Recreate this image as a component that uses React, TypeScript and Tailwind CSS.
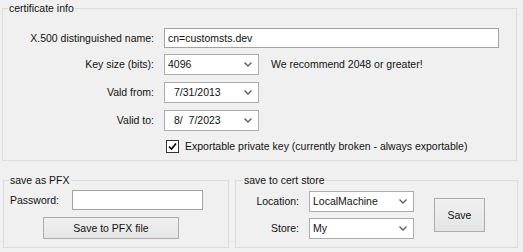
import React from 'react';

function Chevron() {
  return (
    <svg width="8" height="5" viewBox="0 0 8 5" className="shrink-0">
      <path d="M0.5 0.5 L4 4 L7.5 0.5" fill="none" stroke="#606060" strokeWidth="1.4" />
    </svg>
  );
}

function Combo({ value, className, textClass }: { value: string; className: string; textClass?: string }) {
  return (
    <div
      className={
        'flex items-center justify-between bg-white border border-[#acacac] pr-[6px] ' + className
      }
    >
      <span className={'whitespace-pre ' + (textClass ?? 'pl-[3px]')}>{value}</span>
      <Chevron />
    </div>
  );
}

function Button({ label, className }: { label: string; className: string }) {
  return (
    <div
      className={
        'flex items-center justify-center border border-[#acacac] bg-gradient-to-b from-[#f0f0f0] to-[#e5e5e5] ' +
        className
      }
    >
      {label}
    </div>
  );
}

export default function App() {
  return (
    <div className="w-[523px] h-[252px] bg-[#f0f0f0] text-[10.5px] leading-[13px] text-[#111] font-['Liberation_Sans',Arial,sans-serif] pt-[2px] overflow-hidden">
      <fieldset className="ml-[2px] w-[515px] border border-[#dcdcdc] pb-[7px]">
        <legend className="ml-[5px] px-[1px]">certificate info</legend>

        <div className="flex items-center mt-[13px]">
          <span className="w-[151px] text-right">X.500 distinguished name:</span>
          <div className="ml-[10px] w-[335px] h-[20px] bg-white border border-[#a3a3a3] flex items-center pl-[3px]">
            cn=customsts.dev
          </div>
        </div>

        <div className="flex items-center mt-[6px]">
          <span className="w-[151px] text-right">Key size (bits):</span>
          <Combo value="4096" className="ml-[10px] w-[95px] h-[21px]" />
          <span className="ml-[12px]">We recommend 2048 or greater!</span>
        </div>

        <div className="flex items-center mt-[7px]">
          <span className="w-[151px] text-right">Vald from:</span>
          <Combo value="7/31/2013" textClass="pl-[9px]" className="ml-[10px] w-[95px] h-[21px]" />
        </div>

        <div className="flex items-center mt-[7px]">
          <span className="w-[151px] text-right">Valid to:</span>
          <Combo value="8/  7/2023" textClass="pl-[9px]" className="ml-[10px] w-[95px] h-[21px]" />
        </div>

        <div className="flex items-center mt-[9px] ml-[163px]">
          <div className="w-[13px] h-[13px] bg-white border border-[#333333] flex items-center justify-center">
            <svg width="9" height="9" viewBox="0 0 9 9">
              <path d="M1 4.5 L3.5 7 L8 1.5" fill="none" stroke="#000" strokeWidth="1.6" />
            </svg>
          </div>
          <span className="ml-[6px]">Exportable private key (currently broken - always exportable)</span>
        </div>
      </fieldset>

      <div className="flex mt-[13px]">
        <fieldset className="ml-[3px] w-[226px] border border-[#dcdcdc] pb-[8px]">
          <legend className="ml-[5px] px-[1px]">save as PFX</legend>
          <div className="flex items-center mt-[3px]">
            <span className="ml-[6px]">Password:</span>
            <div className="ml-[13px] w-[131px] h-[20px] bg-white border border-[#a3a3a3]" />
          </div>
          <Button label="Save to PFX file" className="ml-[39px] mt-[7px] w-[136px] h-[22px]" />
        </fieldset>

        <fieldset className="ml-[6px] w-[283px] border border-[#dcdcdc] pb-[8px]">
          <legend className="ml-[7px] px-[1px]">save to cert store</legend>
          <div className="flex items-center mt-[4px]">
            <div className="flex flex-col">
              <div className="flex items-center">
                <span className="w-[63px] text-right">Location:</span>
                <Combo value="LocalMachine" className="ml-[10px] w-[105px] h-[21px]" />
              </div>
              <div className="flex items-center mt-[6px]">
                <span className="w-[63px] text-right">Store:</span>
                <Combo value="My" className="ml-[10px] w-[105px] h-[21px]" />
              </div>
            </div>
            <Button label="Save" className="ml-[20px] w-[51px] h-[34px]" />
          </div>
        </fieldset>
      </div>
    </div>
  );
}
